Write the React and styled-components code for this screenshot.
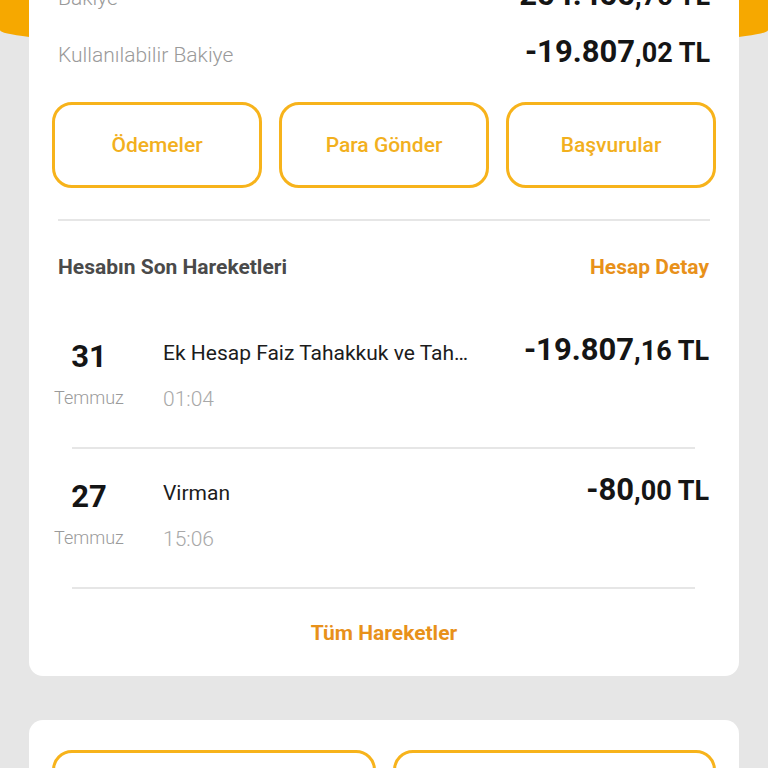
import React from "react";
import styled, { createGlobalStyle } from "styled-components";

const Global = createGlobalStyle`
  html, body { margin: 0; padding: 0; background: #e6e6e6; }
  body { font-family: Roboto, "Noto Sans", "Liberation Sans", sans-serif; -webkit-font-smoothing: antialiased; }
  * { box-sizing: border-box; }
`;

const Page = styled.div`
  margin-top: -70px;
  background: #e6e6e6;
  min-height: 900px;
  padding-bottom: 40px;
`;

const Band = styled.div`
  height: 118px;
  background: #f6a800;
  border-bottom-left-radius: 50% 18px;
  border-bottom-right-radius: 50% 18px;
`;

const Card = styled.section`
  position: relative;
  margin: ${(p) => p.$mt || "0"} 29px 0;
  background: #ffffff;
  border-radius: 14px;
  padding: ${(p) => p.$pt || "0"} 23px 0;
`;

const Balances = styled.div`
  display: flex;
  flex-direction: column;
  gap: 17px;
  padding: 0 6px;
`;

const BalanceRow = styled.div`
  height: 40px;
  display: flex;
  align-items: baseline;
  justify-content: space-between;
  line-height: 40px;
`;

const Label = styled.span`
  font-size: 21px;
  font-weight: 300;
  color: #9a9a9a;
`;

const Amount = styled.span`
  font-weight: 700;
  color: #151515;
  font-size: 31px;
  white-space: nowrap;
  line-height: 40px;
`;

const Small = styled.span`
  font-size: 27px;
`;

const Actions = styled.div`
  display: grid;
  grid-template-columns: repeat(${(p) => p.$cols}, 1fr);
  gap: 17px;
  margin-top: ${(p) => p.$mt || "0"};
`;

const ActionButton = styled.button`
  height: 86px;
  background: #fff;
  border: 3px solid #f7b31b;
  border-radius: 20px;
  color: #f2b01e;
  font-family: inherit;
  font-size: 21px;
  font-weight: 500;
  cursor: pointer;
`;

const Rule = styled.div`
  height: 2px;
  background: #e6e6e6;
  margin: ${(p) => p.$m};
`;

const SectionHead = styled.div`
  height: 88px;
  padding: 4px 7px 0 6px;
  display: flex;
  align-items: center;
  justify-content: space-between;
`;

const Title = styled.h3`
  margin: 0;
  font-size: 21px;
  font-weight: 700;
  color: #4a4a4a;
`;

const LinkText = styled.a`
  font-size: 21px;
  font-weight: 700;
  color: #e8911a;
  text-decoration: none;
`;

const TxRow = styled.div`
  height: 138px;
  display: grid;
  grid-template-columns: 72px minmax(0, 1fr) auto;
  column-gap: 38px;
  padding: 21px 7px 0 1px;
  align-items: start;
`;

const DateCol = styled.div`
  margin-top: 9px;
  display: flex;
  flex-direction: column;
  align-items: center;
  gap: 12px;
`;

const Day = styled.span`
  font-size: 31px;
  font-weight: 700;
  line-height: 36px;
  color: #151515;
`;

const Month = styled.span`
  font-size: 18px;
  font-weight: 300;
  line-height: 22px;
  color: #9a9a9a;
`;

const DescCol = styled.div`
  margin-top: 9px;
  display: flex;
  flex-direction: column;
  gap: 18px;
  min-width: 0;
  padding-right: 12px;
`;

const TxName = styled.span`
  font-size: 21px;
  font-weight: 400;
  line-height: 28px;
  color: #1c1c1c;
  white-space: nowrap;
  overflow: hidden;
  text-overflow: ellipsis;
`;

const TxTime = styled.span`
  font-size: 21px;
  font-weight: 300;
  line-height: 28px;
  color: #a8a8a8;
`;

const Footer = styled.div`
  height: 87px;
  display: flex;
  align-items: center;
  justify-content: center;
`;

const BottomSpace = styled.div`
  height: 30px;
`;

const transactions = [
  { day: "31", month: "Temmuz", name: "Ek Hesap Faiz Tahakkuk ve Tahsilatı", time: "01:04", main: "-19.807", cents: ",16 TL" },
  { day: "27", month: "Temmuz", name: "Virman", time: "15:06", main: "-80", cents: ",00 TL" },
];

export default function App() {
  return (
    <>
      <Global />
      <Page>
        <Band />
        <Card $mt="-93px" $pt="20px">
          <Balances>
            <BalanceRow>
              <Label>Bakiye</Label>
              <Amount>254.455<Small>,75 TL</Small></Amount>
            </BalanceRow>
            <BalanceRow>
              <Label>Kullanılabilir Bakiye</Label>
              <Amount>-19.807<Small>,02 TL</Small></Amount>
            </BalanceRow>
          </Balances>
          <Actions $cols={3} $mt="30px">
            <ActionButton>Ödemeler</ActionButton>
            <ActionButton>Para Gönder</ActionButton>
            <ActionButton>Başvurular</ActionButton>
          </Actions>
          <Rule $m="31px 6px 0" />
          <SectionHead>
            <Title>Hesabın Son Hareketleri</Title>
            <LinkText>Hesap Detay</LinkText>
          </SectionHead>
          {transactions.map((t) => (
            <React.Fragment key={t.day}>
              <TxRow>
                <DateCol>
                  <Day>{t.day}</Day>
                  <Month>{t.month}</Month>
                </DateCol>
                <DescCol>
                  <TxName>{t.name}</TxName>
                  <TxTime>{t.time}</TxTime>
                </DescCol>
                <Amount>{t.main}<Small>{t.cents}</Small></Amount>
              </TxRow>
              <Rule $m="0 21px 0 20px" />
            </React.Fragment>
          ))}
          <Footer>
            <LinkText>Tüm Hareketler</LinkText>
          </Footer>
        </Card>
        <Card $mt="44px" $pt="30px">
          <Actions $cols={2}>
            <ActionButton />
            <ActionButton />
          </Actions>
          <BottomSpace />
        </Card>
      </Page>
    </>
  );
}
